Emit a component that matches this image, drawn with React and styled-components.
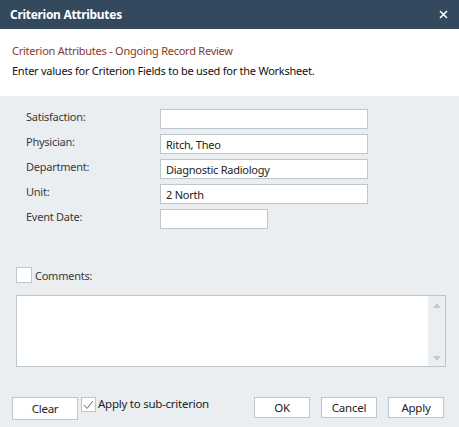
import styled, { createGlobalStyle } from "styled-components";

const GlobalStyle = createGlobalStyle`
  body {
    margin: 0;
    font-family: "Noto Sans", "Open Sans", sans-serif;
    font-size: 11px;
    letter-spacing: -0.25px;
  }
`;

const Dialog = styled.div`
  width: 459px;
  height: 427px;
  display: flex;
  flex-direction: column;
  background: #ebeef0;
  overflow: hidden;
`;

const TitleBar = styled.div`
  height: 29px;
  flex-shrink: 0;
  background: #35495e;
  color: #fff;
  display: flex;
  align-items: center;
  justify-content: space-between;
  padding: 0 10px 0 10px;

  h1 {
    margin: 0;
    font-size: 12px;
    font-weight: bold;
    letter-spacing: -0.3px;
  }
`;

const CloseButton = styled.button`
  background: none;
  border: none;
  padding: 0;
  width: 12px;
  height: 12px;
  display: flex;
  align-items: center;
  justify-content: center;
  cursor: pointer;
`;

const Header = styled.div`
  height: 67px;
  flex-shrink: 0;
  box-sizing: border-box;
  background: #fff;
  padding: 14px 12px 0;
  display: flex;
  flex-direction: column;
  gap: 5px;
`;

const SubTitle = styled.div`
  color: #873a2a;
  line-height: 15px;
`;

const Instructions = styled.div`
  color: #111;
  line-height: 15px;
`;

const Body = styled.div`
  flex: 1;
  display: flex;
  flex-direction: column;
  padding: 13px 15px 0 16px;
`;

const FieldGrid = styled.div`
  display: grid;
  grid-template-columns: 134px 208px;
  row-gap: 5px;
  margin-left: 10px;
`;

const Label = styled.label`
  color: #3a3a3a;
  line-height: 16px;
`;

const Input = styled.input`
  box-sizing: border-box;
  width: ${(p) => p.$width || "208px"};
  height: 20px;
  border: 1px solid #bcc6cd;
  background: #fff;
  padding: 0 5px;
  font-family: inherit;
  font-size: 11px;
  letter-spacing: inherit;
  color: #222;
  outline: none;
`;

const CommentsRow = styled.div`
  display: flex;
  align-items: center;
  gap: 3px;
  margin-top: 38px;
  color: #3a3a3a;
`;

const Box = styled.span`
  box-sizing: border-box;
  width: ${(p) => p.$size || 16}px;
  height: ${(p) => p.$size || 16}px;
  border: 1px solid #bcc6cd;
  background: #fff;
  display: inline-flex;
  align-items: center;
  justify-content: center;
  flex-shrink: 0;
`;

const CommentBox = styled.div`
  margin-top: 12px;
  width: 430px;
  height: 72px;
  box-sizing: border-box;
  border: 1px solid #bcc6cd;
  background: #fff;
  display: flex;
`;

const TextArea = styled.textarea`
  flex: 1;
  border: none;
  outline: none;
  resize: none;
  font-family: inherit;
  font-size: 11px;
`;

const ScrollBar = styled.div`
  width: 17px;
  background: #ebeef0;
  display: flex;
  flex-direction: column;
  justify-content: space-between;
  align-items: center;
  padding: 7px 0 5px;
`;

const Arrow = styled.span`
  width: 0;
  height: 0;
  border-left: 4px solid transparent;
  border-right: 4px solid transparent;
  ${(p) =>
    p.$up
      ? "border-bottom: 5px solid #c3c9ce;"
      : "border-top: 5px solid #c3c9ce;"}
`;

const Footer = styled.div`
  display: flex;
  align-items: flex-start;
  margin-top: 30px;
  margin-left: -4px;
`;

const Button = styled.button`
  box-sizing: border-box;
  width: ${(p) => p.$width || 56}px;
  height: ${(p) => p.$height || 21}px;
  border: 1px solid #bcc6cd;
  background: #fff;
  font-family: inherit;
  font-size: 11.5px;
  letter-spacing: inherit;
  color: #222;
  padding: 0;
  margin-left: ${(p) => p.$gap || 0}px;
`;

const SubCheck = styled.label`
  display: flex;
  align-items: flex-start;
  gap: 2px;
  margin-left: 3px;
  color: #222;
  font-size: 11.5px;
  line-height: 14px;
`;

const Spacer = styled.div`
  flex: 1;
`;

const Check = () => (
  <svg width="11" height="10" viewBox="0 0 11 10">
    <polyline points="1,5 4,8.5 10,1" fill="none" stroke="#6b6b6b" strokeWidth="1" />
  </svg>
);

export default function App() {
  return (
    <>
      <GlobalStyle />
      <Dialog>
        <TitleBar>
          <h1>Criterion Attributes</h1>
          <CloseButton aria-label="Close">
            <svg width="9" height="9" viewBox="0 0 9 9">
              <path d="M1 1 L8 8 M8 1 L1 8" stroke="#fff" strokeWidth="1.6" />
            </svg>
          </CloseButton>
        </TitleBar>
        <Header>
          <SubTitle>Criterion Attributes - Ongoing Record Review</SubTitle>
          <Instructions>
            Enter values for Criterion Fields to be used for the Worksheet.
          </Instructions>
        </Header>
        <Body>
          <FieldGrid>
            <Label>Satisfaction:</Label>
            <Input defaultValue="" />
            <Label>Physician:</Label>
            <Input defaultValue="Ritch, Theo" />
            <Label>Department:</Label>
            <Input defaultValue="Diagnostic Radiology" />
            <Label>Unit:</Label>
            <Input defaultValue="2 North" />
            <Label>Event Date:</Label>
            <Input $width="108px" defaultValue="" />
          </FieldGrid>
          <CommentsRow>
            <Box />
            <span>Comments:</span>
          </CommentsRow>
          <CommentBox>
            <TextArea />
            <ScrollBar>
              <Arrow $up />
              <Arrow />
            </ScrollBar>
          </CommentBox>
          <Footer>
            <Button $width={66} $height={23}>Clear</Button>
            <SubCheck>
              <Box $size={15}>
                <Check />
              </Box>
              <span>Apply to sub-criterion</span>
            </SubCheck>
            <Spacer />
            <Button>OK</Button>
            <Button $gap={11}>Cancel</Button>
            <Button $gap={11}>Apply</Button>
          </Footer>
        </Body>
      </Dialog>
    </>
  );
}
